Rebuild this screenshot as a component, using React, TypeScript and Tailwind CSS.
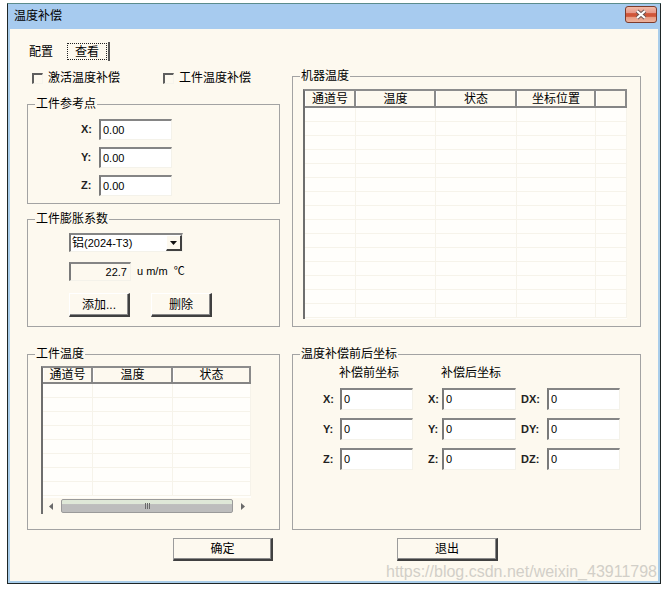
import React from "react";

type Col = { label: string; w: string };

function GroupBox({ label, className, children }: { label: string; className: string; children?: React.ReactNode }) {
  return (
    <div className={`relative border border-[#a3a3a3] ${className}`}>
      <span className="absolute left-[7px] -top-[9px] bg-[#fdf9ef] px-[1px] leading-[16px] text-[12px] whitespace-nowrap">
        {label}
      </span>
      {children}
    </div>
  );
}

function Field({ value, className }: { value: string; className: string }) {
  return (
    <div
      className={`flex items-center border-t-2 border-l-2 border-r border-b border-t-[#858585] border-l-[#7a7a7a] border-r-[#f4f2ea] border-b-[#f4f2ea] text-[11px] leading-none ${className}`}
    >
      {value}
    </div>
  );
}

function Btn({ label, className }: { label: string; className: string }) {
  return (
    <div
      className={`flex items-center justify-center border border-r-2 border-b-2 border-r-[#404040] border-b-[#404040] shadow-[inset_-1px_-1px_0_#8a8a8a] bg-[#fdf9ef] text-[12px] leading-none ${className}`}
    >
      {label}
    </div>
  );
}

function CheckBox({ label, className }: { label: string; className: string }) {
  return (
    <div className={`flex items-center ${className}`}>
      <div className="w-[11px] h-[11px] border-t-2 border-l-2 border-r border-b border-t-[#5e5e5e] border-l-[#5e5e5e] border-r-[#f6f4ec] border-b-[#f6f4ec]" />
      <span className="ml-[5px] text-[12px] leading-[16px]">{label}</span>
    </div>
  );
}

function ListView({
  cols,
  rows,
  className,
  headerH,
  scroll,
}: {
  cols: Col[];
  rows: number;
  className: string;
  headerH: string;
  scroll?: React.ReactNode;
}) {
  return (
    <div
      className={`flex flex-col border-l-2 border-t-2 border-l-[#6e6e6e] border-t-[#8c8c8c] bg-[#fffefb] overflow-hidden ${className}`}
    >
      <div className={`flex shrink-0 ${headerH} border-b-2 border-b-[#858585] bg-[#fdf9ef]`}>
        {cols.map((c, i) => (
          <div
            key={i}
            className={`${c.w} shrink-0 flex items-center justify-center border-l border-l-white border-r-2 border-r-[#8a8a8a] text-[12px] leading-none`}
          >
            {c.label}
          </div>
        ))}
      </div>
      <div className="flex-1 flex flex-col overflow-hidden">
        {Array.from({ length: rows }).map((_, r) => (
          <div key={r} className="flex h-[14px] shrink-0 border-b border-b-[#f6f3ea]">
            {cols.map((c, i) => (
              <div key={i} className={`${c.w} shrink-0 border-r border-r-[#f6f3ea]`} />
            ))}
          </div>
        ))}
      </div>
      {scroll}
    </div>
  );
}

function HScroll() {
  return (
    <div className="flex h-[16px] shrink-0 items-center bg-[#fdf9ef]">
      <div className="w-[16px] h-full flex items-center justify-center">
        <svg width="4" height="7" viewBox="0 0 4 7">
          <polygon points="4,0 0,3.5 4,7" fill="#6a6a6a" />
        </svg>
      </div>
      <div className="flex-1 mx-[2px] h-[14px] rounded-[2px] border border-[#9a9a9a] bg-[linear-gradient(#dfe8d8_0%,#dfe8d8_30%,#bdbdbd_38%,#bdbdbd_100%)] flex items-center justify-center gap-[1px]">
        <div className="w-[1px] h-[6px] bg-[#6a6a6a]" />
        <div className="w-[1px] h-[6px] bg-[#6a6a6a]" />
        <div className="w-[1px] h-[6px] bg-[#6a6a6a]" />
      </div>
      <div className="w-[16px] h-full flex items-center justify-center">
        <svg width="4" height="7" viewBox="0 0 4 7">
          <polygon points="0,0 4,3.5 0,7" fill="#6a6a6a" />
        </svg>
      </div>
    </div>
  );
}

function CoordRow({ a, b, c }: { a: string; b: string; c: string }) {
  return (
    <div className="flex items-center h-[22px] pl-[30px]">
      <span className="w-[17px] text-[11px] font-bold text-[#222]">{a}:</span>
      <Field value="0" className="w-[73px] h-[22px] bg-white pl-[2px]" />
      <span className="ml-[15px] w-[14px] text-[11px] font-bold text-[#222]">{b}:</span>
      <Field value="0" className="w-[74px] h-[22px] bg-white pl-[2px]" />
      <span className="ml-[5px] w-[26px] text-[11px] font-bold text-[#222]">{c}:</span>
      <Field value="0" className="w-[73px] h-[22px] bg-white pl-[2px]" />
    </div>
  );
}

function RefRow({ axis }: { axis: string }) {
  return (
    <div className="flex items-center h-[21px] pl-[53px]">
      <span className="w-[18px] text-[11px] font-bold text-[#222]">{axis}:</span>
      <Field value="0.00" className="w-[73px] h-[21px] bg-white pl-[2px]" />
    </div>
  );
}

export default function App() {
  const machineCols: Col[] = [
    { label: "通道号", w: "w-[51px]" },
    { label: "温度", w: "w-[80px]" },
    { label: "状态", w: "w-[81px]" },
    { label: "坐标位置", w: "w-[79px]" },
    { label: "", w: "w-[31px]" },
  ];
  const partCols: Col[] = [
    { label: "通道号", w: "w-[50px]" },
    { label: "温度", w: "w-[80px]" },
    { label: "状态", w: "w-[78px]" },
  ];

  return (
    <div className="w-[667px] h-[590px] bg-white overflow-hidden text-black font-['Liberation_Sans','Noto_Sans_CJK_SC',sans-serif] text-[12px]">
      <div className="ml-[7px] mt-[3px] w-[654px] h-[581px] flex flex-col border-l border-r border-b border-t border-l-[#1e2626] border-r-[#1e2626] border-b-[#1e2626] border-t-[#5b8c8c]">
        {/* title bar */}
        <div className="h-[25px] shrink-0 flex items-center justify-between bg-[#a7cbef] pl-[6px] pr-[3px]">
          <span className="text-[12px] leading-[16px] mt-[-2px]">温度补偿</span>
          <div className="w-[32px] h-[17px] mt-[-4px] rounded-[3px] border border-[#7d3b2c] bg-[linear-gradient(#f2bba8_0%,#e7998a_38%,#d0563a_44%,#cf5538_62%,#e79c84_70%,#eeb29c_100%)] flex items-center justify-center">
            <svg width="14" height="11" viewBox="0 0 14 11">
              <path d="M3 2 L11 9 M11 2 L3 9" stroke="#6a5250" strokeWidth="4" />
              <path d="M3 2 L11 9 M11 2 L3 9" stroke="#ffffff" strokeWidth="2.2" />
            </svg>
          </div>
        </div>
        {/* client */}
        <div className="relative flex-1 flex flex-col border-l-2 border-r-2 border-b-2 border-[#a9cdea] bg-[#fdf9ef]">
          {/* tabs */}
          <div className="mt-[13px] h-[19px] flex items-center pl-[19px]">
            <span className="text-[12px] leading-[16px]">配置</span>
            <div className="ml-[14px] h-[19px] flex items-center border-r-2 border-r-[#555]">
              <div className="w-[40px] h-[17px] border border-dotted border-[#222] flex items-center justify-center text-[12px] leading-none mr-[1px]">
                查看
              </div>
            </div>
          </div>

          {/* columns */}
          <div className="mt-[8px] flex pl-[17px] gap-[12px]">
            {/* left column */}
            <div className="w-[253px] flex flex-col">
              <div className="h-[18px] flex items-center pl-[5px]">
                <CheckBox label="激活温度补偿" className="w-[131px]" />
                <CheckBox label="工件温度补偿" className="" />
              </div>

              <GroupBox label="工件参考点" className="mt-[17px] h-[100px]">
                <div className="flex flex-col pt-[14px] gap-[7px]">
                  <RefRow axis="X" />
                  <RefRow axis="Y" />
                  <RefRow axis="Z" />
                </div>
              </GroupBox>

              <GroupBox label="工件膨胀系数" className="mt-[15px] h-[108px]">
                <div className="flex flex-col pl-[41px] pt-[13px]">
                  <div className="flex w-[114px] h-[19px] border-t-2 border-l-2 border-r border-b border-t-[#858585] border-l-[#7a7a7a] border-r-[#f4f2ea] border-b-[#f4f2ea] bg-white">
                    <div className="flex-1 flex items-center pl-[1px] leading-none">
                      <span className="text-[12px]">铝</span>
                      <span className="text-[11px]">(2024-T3)</span>
                    </div>
                    <div className="w-[16px] h-full flex items-center justify-center border border-r-2 border-b-2 border-t-white border-l-white border-r-[#404040] border-b-[#404040] bg-[#fdf9ef]">
                      <svg width="7" height="4" viewBox="0 0 7 4">
                        <polygon points="0,0 7,0 3.5,4" fill="#111" />
                      </svg>
                    </div>
                  </div>
                  <div className="mt-[10px] flex items-center">
                    <Field value="22.7" className="w-[62px] h-[19px] justify-end pr-[3px] bg-[#fdf9ef]" />
                    <span className="ml-[6px] text-[11px] whitespace-pre">u m/m  ℃</span>
                  </div>
                  <div className="mt-[12px] flex gap-[21px]">
                    <Btn label="添加..." className="w-[61px] h-[24px] border-t-white border-l-white" />
                    <Btn label="删除" className="w-[61px] h-[24px] border-t-white border-l-white" />
                  </div>
                </div>
              </GroupBox>

              <GroupBox label="工件温度" className="mt-[27px] h-[176px]">
                <div className="pl-[13px] pt-[11px]">
                  <ListView
                    cols={partCols}
                    rows={8}
                    className="w-[210px] h-[148px]"
                    headerH="h-[16px]"
                    scroll={<HScroll />}
                  />
                </div>
              </GroupBox>

              <div className="mt-[8px] pl-[146px]">
                <Btn label="确定" className="w-[100px] h-[23px] border-t-[#9c9c9c] border-l-[#9c9c9c]" />
              </div>
            </div>

            {/* right column */}
            <div className="w-[349px] flex flex-col">
              <GroupBox label="机器温度" className="mt-[7px] h-[251px]">
                <div className="pl-[10px] pt-[12px]">
                  <ListView cols={machineCols} rows={15} className="w-[324px] h-[230px]" headerH="h-[17px]" />
                </div>
              </GroupBox>

              <GroupBox label="温度补偿前后坐标" className="mt-[27px] h-[176px]">
                <div className="flex flex-col">
                  <div className="mt-[10px] h-[16px] flex items-center text-[12px] leading-[16px]">
                    <span className="ml-[46px] w-[102px]">补偿前坐标</span>
                    <span>补偿后坐标</span>
                  </div>
                  <div className="mt-[7px] flex flex-col gap-[8px]">
                    <CoordRow a="X" b="X" c="DX" />
                    <CoordRow a="Y" b="Y" c="DY" />
                    <CoordRow a="Z" b="Z" c="DZ" />
                  </div>
                </div>
              </GroupBox>

              <div className="mt-[8px] pl-[105px]">
                <Btn label="退出" className="w-[101px] h-[23px] border-t-[#9c9c9c] border-l-[#9c9c9c]" />
              </div>
            </div>
          </div>

          <span className="absolute right-[1px] bottom-[0px] text-[16px] leading-[18px] text-[#d2cfc8] whitespace-nowrap font-['Liberation_Sans',Arial,sans-serif]">
            https://blog.csdn.net/weixin_43911798
          </span>
        </div>
      </div>
    </div>
  );
}
